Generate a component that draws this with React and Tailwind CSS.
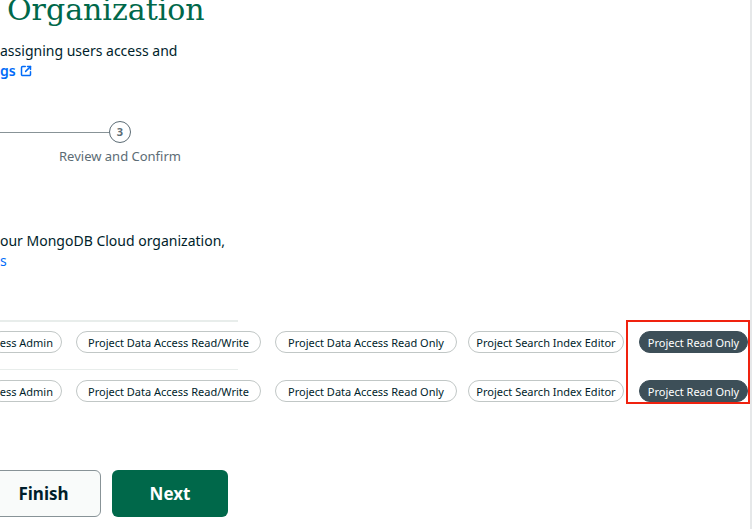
import React from "react";

const font = { fontFamily: '"Noto Sans", "Lato", sans-serif' };

function Pill({ children, dark = false, className = "" }) {
  return (
    <div
      className={
        "h-[22px] shrink-0 rounded-full flex items-center justify-center whitespace-nowrap text-[11px] leading-none " +
        (dark
          ? "bg-[#3D4F58] text-white border border-[#3D4F58] "
          : "bg-white text-[#001E2B] border border-[#C1C7C6] ") +
        className
      }
    >
      {children}
    </div>
  );
}

function Row() {
  return (
    <div className="flex w-max items-center">
      <Pill className="-ml-[10px] w-[72px] justify-end pr-[8px]">ess Admin</Pill>
      <Pill className="ml-[14px] w-[185px]">Project Data Access Read/Write</Pill>
      <Pill className="ml-[14px] w-[182px]">Project Data Access Read Only</Pill>
      <Pill className="ml-[11px] w-[156px]">Project Search Index Editor</Pill>
      <Pill dark className="ml-[15px] w-[109px]">Project Read Only</Pill>
    </div>
  );
}

export default function App() {
  return (
    <div
      className="relative w-[752px] h-[529px] overflow-hidden bg-white border-r-2 border-[#E6E8E9] text-[#001E2B]"
      style={font}
    >
      <h1
        className="ml-[7px] -mt-[10px] text-[30px] leading-[40px] text-[#00684A] whitespace-nowrap"
        style={{ fontFamily: '"DejaVu Serif", serif' }}
      >
        Organization
      </h1>

      <p className="mt-[11px] text-[14px] leading-[20px] whitespace-nowrap">
        <span className="block">assigning users access and</span>
        <span className="flex items-center gap-[4px] text-[#016BF8] font-semibold">
          gs
          <svg width="12" height="12" viewBox="0 0 16 16" fill="none" stroke="#016BF8" strokeWidth="2" strokeLinecap="round" strokeLinejoin="round">
            <path d="M7 2H3.5A1.5 1.5 0 0 0 2 3.5v9A1.5 1.5 0 0 0 3.5 14h9a1.5 1.5 0 0 0 1.5-1.5V9" />
            <path d="M10 2h4v4" />
            <path d="M14 2 7.5 8.5" />
          </svg>
        </span>
      </p>

      <div className="mt-[40px]">
        <div className="flex items-center">
          <div className="w-[109px] h-px bg-[#889397]" />
          <div className="w-[22px] h-[22px] rounded-full border border-[#5C6C75] flex items-center justify-center text-[11px] font-bold text-[#5C6C75]">
            3
          </div>
        </div>
        <div className="ml-[58px] w-[124px] mt-[4px] text-center text-[13px] leading-[18px] text-[#5C6C75] whitespace-nowrap">
          Review and Confirm
        </div>
      </div>

      <p className="mt-[66px] text-[14px] leading-[20px] whitespace-nowrap">
        <span className="block">our MongoDB Cloud organization,</span>
        <span className="block text-[#016BF8]">s</span>
      </p>

      <div className="mt-[49px]">
        <div className="border-t-2 border-[#E8EDEB] pt-[9px] pb-[16px] w-[238px]">
          <Row />
        </div>
        <div className="border-t border-[#E8EDEB] pt-[10px] pb-[16px] w-[238px]">
          <Row />
        </div>
      </div>

      <div className="mt-[52px] flex gap-[11px]">
        <button className="-ml-[14px] w-[115px] h-[47px] rounded-[6px] border border-[#889397] bg-[#F9FBFA] text-[17px] font-bold text-[#001E2B]">
          Finish
        </button>
        <button className="w-[116px] h-[47px] rounded-[6px] bg-[#00684A] text-[17px] font-bold text-white">
          Next
        </button>
      </div>

      <div className="absolute left-[626px] top-[320px] w-[124px] h-[84px] border-2 border-[#F0220F] pointer-events-none" />
    </div>
  );
}
